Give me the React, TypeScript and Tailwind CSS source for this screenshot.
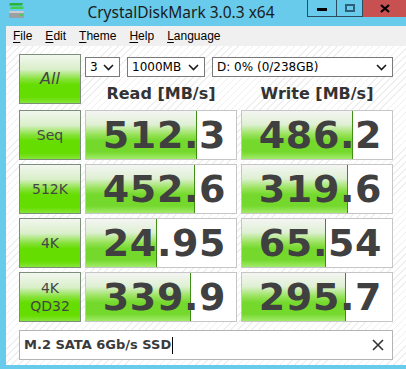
import React from 'react';

interface Row {
  label: string[];
  read: string;
  readBar: number;
  write: string;
  writeBar: number;
}

const rows: Row[] = [
  { label: ['Seq'], read: '512.3', readBar: 111, write: '486.2', writeBar: 111 },
  { label: ['512K'], read: '452.6', readBar: 109, write: '319.6', writeBar: 106 },
  { label: ['4K'], read: '24.95', readBar: 71, write: '65.54', writeBar: 84 },
  { label: ['4K', 'QD32'], read: '339.9', readBar: 105, write: '295.7', writeBar: 104 },
];

const menu = ['File', 'Edit', 'Theme', 'Help', 'Language'];

function Chevron() {
  return (
    <svg width="11" height="7" viewBox="0 0 11 7" className="shrink-0">
      <path d="M1 1 L5.5 5.5 L10 1" fill="none" stroke="#1a1a1a" strokeWidth="1.6" />
    </svg>
  );
}

function Select({ value, className }: { value: string; className: string }) {
  return (
    <div
      className={`flex h-[20px] items-center justify-between border border-[#7a7a7a] bg-white pl-[4px] pr-[5px] text-[12px] text-black ${className}`}
    >
      <span>{value}</span>
      <Chevron />
    </div>
  );
}

function GreenButton({ lines, big }: { lines: string[]; big?: boolean }) {
  return (
    <div className="flex h-[50px] flex-col items-center justify-center border border-[#7d8f7b] bg-[image:linear-gradient(to_bottom,#f2f6ef_0%,#d9efc9_30%,#86e23a_50%,#66dd00_62%,#66dd00_88%,#86e53a_100%)] leading-[18px] text-[#454545]">
      {lines.map((l) => (
        <span key={l} className={big ? 'text-[16px] italic' : 'text-[14px]'}>
          {l}
        </span>
      ))}
    </div>
  );
}

function ResultBox({ value, bar }: { value: string; bar: number }) {
  return (
    <div className="relative h-[50px] border border-[#c6c6c6] bg-white">
      <div
        className="absolute bottom-0 left-0 top-0 border-r border-[#3f8f16] bg-[image:linear-gradient(to_bottom,#f4f5f3_0%,#dff0d4_28%,#9ae35e_48%,#74d92c_62%,#74d92c_85%,#a2ea6a_100%)]"
        style={{ width: bar }}
      />
      <div className="relative flex h-full items-center justify-end pr-[10px] text-[38px] font-bold leading-none tracking-[0.6px] text-[#404040]">
        {value}
      </div>
    </div>
  );
}

export default function App() {
  return (
    <div className="flex h-[369px] w-[406px] flex-col overflow-hidden bg-[#69cbeb] font-['DejaVu_Sans',sans-serif]">
      {/* Title bar */}
      <div className="flex h-[26px] shrink-0 items-start">
        <div className="pl-[8px] pt-[2px]">
          <svg width="17" height="17" viewBox="0 0 17 17">
            <path d="M2 1 H15 L14 3.5 H1 Z" fill="#28b33a" />
            <path d="M3 4.5 H16 L15 7 H2 Z" fill="#3fcf4a" />
            <rect x="1" y="9" width="15" height="7" rx="1.5" fill="#9aa0a4" />
            <rect x="1" y="9" width="15" height="2" rx="1" fill="#c9cdd0" />
            <rect x="11.5" y="12" width="3" height="2" fill="#3fd64a" />
          </svg>
        </div>
        <div className="flex h-[25px] flex-1 items-center justify-center pl-[30px] font-['Noto_Sans',sans-serif] text-[15.5px] text-[#1b1b1b]">
          CrystalDiskMark 3.0.3 x64
        </div>
        <div className="flex h-[17px]">
          <div className="flex w-[29px] items-center justify-center border-b border-l border-[#2a4c5c]">
            <div className="mt-[2px] h-[3px] w-[10px] bg-black" />
          </div>
          <div className="flex w-[26px] items-center justify-center border-b border-l border-[#2a4c5c]">
            <div className="h-[8px] w-[10px] border-2 border-[#2d5f79]" />
          </div>
          <div className="flex w-[44px] items-center justify-center border-l border-[#2a4c5c] bg-[#c75050]">
            <svg width="10" height="9" viewBox="0 0 10 9">
              <path d="M1 1 L9 8 M9 1 L1 8" stroke="#000" strokeWidth="2.2" />
            </svg>
          </div>
        </div>
      </div>

      {/* Client area */}
      <div className="ml-[6px] flex flex-1 flex-col">
        <div className="flex h-[20px] shrink-0 items-center gap-[13px] bg-[#f0f0f0] pl-[7px] font-['Liberation_Sans',sans-serif] text-[12px] text-black">
          {menu.map((m) => (
            <span key={m}>
              <span className="underline underline-offset-2">{m[0]}</span>
              {m.slice(1)}
            </span>
          ))}
        </div>

        <div className="flex flex-1 flex-col bg-white bg-[image:repeating-linear-gradient(135deg,#ffffff_0px,#ffffff_4px,#efefef_4px,#efefef_5px)] pl-[13px] pt-[8px]">
          <div className="grid grid-cols-[62px_152px_152px] gap-x-[4px] gap-y-[4px]">
            <GreenButton lines={['All']} big />
            <div className="col-span-2 flex flex-col">
              <div className="mt-[3px] flex gap-[7px]">
                <Select value="3" className="w-[35px]" />
                <Select value="1000MB" className="w-[78px]" />
                <Select value="D: 0% (0/238GB)" className="w-[181px]" />
              </div>
              <div className="mt-[5px] grid grid-cols-2 gap-x-[4px] text-[16px] font-bold text-[#333]">
                <span className="text-center">Read [MB/s]</span>
                <span className="text-center">Write [MB/s]</span>
              </div>
            </div>

            {rows.map((r) => (
              <React.Fragment key={r.read}>
                <GreenButton lines={r.label} />
                <ResultBox value={r.read} bar={r.readBar} />
                <ResultBox value={r.write} bar={r.writeBar} />
              </React.Fragment>
            ))}
          </div>

          <div className="mt-[8px] flex h-[30px] w-[374px] items-center border border-[#b4b4b4] bg-white pl-[4px] pr-[8px]">
            <span className="text-[13px] font-bold text-[#3a3a3a]">M.2 SATA 6Gb/s SSD</span>
            <span className="ml-[1px] h-[17px] w-px bg-black" />
            <svg width="12" height="12" viewBox="0 0 12 12" className="ml-auto">
              <path d="M1 1 L11 11 M11 1 L1 11" stroke="#333" strokeWidth="1.6" />
            </svg>
          </div>
        </div>
      </div>
      <div className="h-[4px] shrink-0" />
    </div>
  );
}
